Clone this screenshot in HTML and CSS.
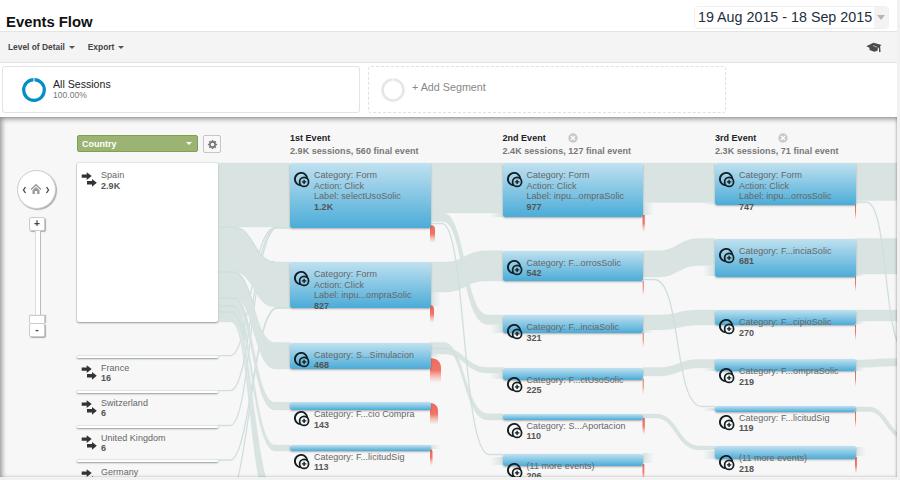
FILE: index.html
```html
<!DOCTYPE html>
<html lang="en">
<head>
<meta charset="utf-8">
<title>Events Flow</title>
<link rel="stylesheet" href="styles.css">
</head>
<body>
<svg class="defs" width="0" height="0">
  <symbol id="event" viewBox="0 0 16 16">
    <path d="M13.300 6.800A6.200 6.200 0 1 0 6.800 13.300" fill="none" stroke="#141e22" stroke-width="1.900"/>
    <circle cx="10.100" cy="9.900" r="4.500" fill="none" stroke="#141e22" stroke-width="1.700"/>
    <path d="M10.100 7.700v4.400M7.900 9.900h4.400" stroke="#141e22" stroke-width="1.400"/>
  </symbol>
  <symbol id="arrows" viewBox="0 0 16 16">
    <path d="M.7 2.400h5V.2l5 3.900-5 3.900V5.800h-5zM6 9.100h5V6.900l4.800 3.900-4.800 3.900v-2.200H6z" fill="#353233"/>
  </symbol>
  <symbol id="close" viewBox="0 0 10 10">
    <circle cx="5" cy="5" r="4.700" fill="#c9c9c9"/>
    <path d="M3 3l4 4M7 3l-4 4" stroke="#fff" stroke-width="1.300"/>
  </symbol>
</svg>
<div class="page">
  <header class="header">
    <h1 class="title">Events Flow</h1>
    <div class="date"><span class="date-text">19 Aug 2015 - 18 Sep 2015</span><span class="date-drop"><i class="caret caret-light"></i></span></div>
  </header>
  <nav class="toolbar">
    <span class="menu">Level of Detail<i class="caret"></i></span>
    <span class="menu">Export<i class="caret"></i></span>
    <svg class="cap" viewBox="0 0 16 11"><path d="M.3 4.200 7.500.8l8.200 2.100-1.600 1.200.5 5.700-1.500.4-.2-4.700-1 .6-.4 2.600-3.200 1.100L3.500 8V5.700z" fill="#4a4a4a"/><path d="M7 3.600l4.300 1.600" stroke="#ddd" stroke-width=".7"/></svg>
  </nav>
  <section class="segments">
    <div class="segment">
      <svg class="ring" viewBox="0 0 24 24"><circle cx="12" cy="12" r="10.300" fill="none" stroke="#058dc7" stroke-width="3.200"/><path d="M12 0v4" stroke="#fff" stroke-width="1"/></svg>
      <div><div class="seg-name">All Sessions</div><div class="seg-pct">100.00%</div></div>
    </div>
    <div class="segment segment-add">
      <svg class="ring" viewBox="0 0 24 24"><circle cx="12" cy="12" r="10.500" fill="none" stroke="#e6e6e6" stroke-width="2.600"/><path d="M12 0v4" stroke="#fff" stroke-width="1"/></svg>
      <div class="seg-add">+ Add Segment</div>
    </div>
  </section>
  <main class="canvas">
    <svg class="links" viewBox="0 117 897 360">
      <defs>
        <linearGradient id="out" x1="0" x2="1"><stop offset="0" stop-color="#d5e2e1"/><stop offset="1" stop-color="#d5e2e1" stop-opacity="0"/></linearGradient>
        <linearGradient id="in" x1="0" x2="1"><stop offset="0" stop-color="#d5e2e1" stop-opacity="0"/><stop offset="1" stop-color="#d5e2e1"/></linearGradient>
        <linearGradient id="drop" x1="0" x2="0" y1="0" y2="1"><stop offset="0" stop-color="#ef6a5a"/><stop offset=".5" stop-color="#ef7566"/><stop offset="1" stop-color="#f6a79d" stop-opacity="0"/></linearGradient>
      </defs>
      <g class="thin">
        <path d="M218 355.700H230C250 355.700 251 228 275 228H290"/>
        <path d="M218 390.700H230C252 390.700 251 227 277 227H290"/>
        <path d="M218 425.500H230C252 425.500 250 226.500 279 226.500H290"/>
        <path d="M218 460H230C250 460 254 308 277 308H290"/>
        <path d="M232 500C252 440 254 307.500 278 307.500H290"/>
      </g>
      <g class="band">
        <path d="M218 163H290V227H218z"/>
        <path d="M218 227H234C254 227 254 262 275 262H290V307H275C254 307 254 272 234 272H218z"/>
        <path d="M218 272H234C254 272 254 342.500 275 342.500H290V369H275C254 369 254 298 234 298H218z"/>
        <path d="M218 298H234C254 298 254 402.300 275 402.300H290V410H275C252 410 254 306 232 306H218z"/>
        <path d="M218 306H232C252 306 254 445 275 445H290V451H275C252 451 252 312 232 312H218z"/>
        <path d="M218 312H232C252 312 254 490 277 500H273C251 490 252 317 230 317H218z"/>
        <path d="M218 316H230C250 316 253 500 277 520H273C249 500 250 322 231 322H218z"/>
        <path d="M430 163H503V213H430z"/>
        <path d="M430 213H443C466 213 464 315 488 315H503V324.500H488C461 324.500 464 221.500 443 221.500H430z"/>
        <path d="M430 262H446C464 262 466 250.700 486 250.700H503V281H486C466 281 464 292 446 292H430z"/>
        <path d="M430 342.500H444C464 342.500 466 413.700 488 413.700H503V420H488C464 420 464 348.500 444 348.500H430z"/>
        <path d="M430 348H444C464 348 466 367.500 488 367.500H503V373H488C466 373 464 354 444 354H430z"/>
        <path d="M643 163H715V202.500H643z"/>
        <path d="M643 250.700H658C678 250.700 679 238.500 699 238.500H715V265.500H699C679 265.500 678 277 658 277H643z"/>
        <path d="M643 315H658C678 315 679 310 699 310H715V325H699C679 325 678 330 658 330H643z"/>
        <path d="M643 367.500H658C678 367.500 679 359.500 699 359.500H715V368H699C679 368 678 376 658 376H643z"/>
        <path d="M643 414H656C678 414 678 446 700 446H715V450H700C676 450 676 418 656 418H643z"/>
        <path d="M855 163H897V200.500H855z"/>
        <path d="M855 238.500H897V274H855z"/>
        <path d="M855 310H897V321H855z"/>
        <path d="M855 360C875 360 875 358.500 897 358.500V366C878 366 875 367.500 855 367.500z"/>
        <path d="M855 407H869C882 407 888 424 897 432V437C884 427 882 411.500 869 411.500H855z"/>
      </g>
      <g class="thin">
        <path d="M218 227.300H234C254 227.300 254 262 275 262M218 272H234C243 272 248 290 254 305M218 298H234C241 298 245 312 248 325M218 306H232C239 306 243 320 247 337M218 312H231C238 312 242 326 245 340"/>
        <path d="M430 223.500H442C466 223.500 462 454.500 489 454.500H503"/>
        <path d="M643 279.500H654C682 279.500 673 406.500 702 406.500H715"/>
        <path d="M855 202H866C888 202 883 330 902 350"/>
        <path d="M430 348.500H444C452 348.500 454 353 458 358"/>
      </g>
      <g fill="url(#out)">
        <path d="M430 292h11v14h-11z"/><path d="M430 354h11v3h-11z"/><path d="M430 445h11v4h-11z"/>
        <path d="M643 203h11v12h-11z"/><path d="M643 330h10v3h-10z"/><path d="M643 453h11v10h-11z"/>
        <path d="M855 202h11v1.500h-11z"/><path d="M855 274h11v2h-11z"/><path d="M855 321h10v3h-10z"/><path d="M855 368h10v3h-10z"/><path d="M855 447h11v9h-11z"/>
      </g>
      <g fill="url(#in)">
        <path d="M490 213h13v4h-13z"/><path d="M490 325h13v8h-13z"/><path d="M490 373h13v6h-13z"/><path d="M490 457h13v8h-13z"/>
        <path d="M703 203h12v1.500h-12z"/><path d="M703 266h12v10h-12z"/><path d="M703 368h12v3h-12z"/><path d="M703 408h12v3h-12z"/><path d="M703 451h12v8h-12z"/>
      </g>
      <g fill="url(#drop)">
        <path d="M430 225q5 0 5 4v14h-5z"/>
        <path d="M430 305q4 0 4 4v14h-4z"/>
        <path d="M430 358c7 0 11 4 11 10v15h-11z"/>
        <path d="M430 403c5 0 8 3 8 8v14h-8z"/>
        <path d="M430 449q2.500 0 2.500 3v14h-2.500z"/>
        <path d="M642.500 215h2.300v17h-2.300z"/>
        <path d="M642.500 418h2.300v17h-2.300z"/>
        <path d="M642.500 464h1.800v17h-1.800z"/>
        <path d="M855 457h1.900v17H855z"/>
        <path d="M642.700 281h1v15h-1z"/><path d="M642.700 333h1v15h-1z"/><path d="M642.700 379h1v16h-1z"/>
        <path d="M855 204h1v16h-1z"/><path d="M855 276h1v16h-1z"/><path d="M855 325h1v16h-1z"/><path d="M855 371h1v16h-1z"/><path d="M855 412h1v16h-1z"/>
      </g>
    </svg>

    <div class="heads">
      <div class="dimension">
        <div class="select">Country<i class="caret caret-white"></i></div>
        <div class="gear"><svg viewBox="0 0 12 12"><circle cx="6" cy="6" r="2.900" fill="none" stroke="#777" stroke-width="1.800"/><path d="M6 1v1.800M6 9.200V11M1 6h1.800M9.200 6H11M2.500 2.500l1.200 1.200M8.300 8.300l1.200 1.200M2.500 9.500l1.200-1.200M8.300 3.700l1.200-1.200" stroke="#777" stroke-width="1.700"/></svg></div>
      </div>
      <div class="head"><div class="head-title">1st Event</div><div class="head-sub">2.9K sessions, 560 final event</div></div>
      <div class="head"><div class="head-title"><span class="head-name">2nd Event</span><svg class="close"><use href="#close"/></svg></div><div class="head-sub">2.4K sessions, 127 final event</div></div>
      <div class="head"><div class="head-title"><span class="head-name head-name-3">3rd Event</span><svg class="close"><use href="#close"/></svg></div><div class="head-sub">2.3K sessions, 71 final event</div></div>
    </div>

    <div class="pan-zoom">
      <div class="pan"><svg viewBox="0 0 39 39"><path d="M8.500 17l-2 3 2 3M29.500 17l2 3-2 3" fill="none" stroke="#444" stroke-width="1.300"/><path d="M14 19.500l5-4.700 5 4.700" fill="none" stroke="#999" stroke-width="1.500"/><path d="M15.500 20.300l3.500-3.200 3.500 3.200V24h-2.300v-3h-2.400v3h-2.300z" fill="#999"/></svg></div>
      <div class="zoom-btn">+</div>
      <div class="track"></div>
      <div class="handle"></div>
      <div class="zoom-btn">-</div>
    </div>

    <div class="node country" style="--y:46px;--h:158.500px"><svg class="icon"><use href="#arrows"/></svg>Spain<b>2.9K</b></div>
    <div class="node country" style="--y:238.500px;--h:2.500px"><svg class="icon"><use href="#arrows"/></svg>France<b>16</b></div>
    <div class="node country" style="--y:273.500px;--h:2.500px"><svg class="icon"><use href="#arrows"/></svg>Switzerland<b>6</b></div>
    <div class="node country" style="--y:308.500px;--h:2.500px"><svg class="icon"><use href="#arrows"/></svg>United Kingdom<b>6</b></div>
    <div class="node country" style="--y:342.500px;--h:2.500px"><svg class="icon"><use href="#arrows"/></svg>Germany</div>

    <div class="node first" style="--y:46px;--h:65px"><svg class="icon"><use href="#event"/></svg>Category: Form<br>Action: Click<br>Label: selectUsoSolic<b>1.2K</b></div>
    <div class="node first" style="--y:145px;--h:46px"><svg class="icon"><use href="#event"/></svg>Category: Form<br>Action: Click<br>Label: inpu...ompraSolic<b>827</b></div>
    <div class="node first" style="--y:225.500px;--h:26.500px"><svg class="icon"><use href="#event"/></svg>Category: S...Simulacion<b>468</b></div>
    <div class="node first" style="--y:285px;--h:8px"><svg class="icon"><use href="#event"/></svg>Category: F...cio Compra<b>143</b></div>
    <div class="node first" style="--y:327.500px;--h:6.500px"><svg class="icon"><use href="#event"/></svg>Category: F...licitudSig<b>113</b></div>

    <div class="node second" style="--y:46px;--h:54px"><svg class="icon"><use href="#event"/></svg>Category: Form<br>Action: Click<br>Label: inpu...ompraSolic<b>977</b></div>
    <div class="node second" style="--y:133.500px;--h:30.500px"><svg class="icon"><use href="#event"/></svg>Category: F...orrosSolic<b>542</b></div>
    <div class="node second" style="--y:198px;--h:18px"><svg class="icon"><use href="#event"/></svg>Category: F...inciaSolic<b>321</b></div>
    <div class="node second" style="--y:250.500px;--h:12.500px"><svg class="icon"><use href="#event"/></svg>Category: F...ctUsoSolic<b>225</b></div>
    <div class="node second" style="--y:296.500px;--h:6.500px"><svg class="icon"><use href="#event"/></svg>Category: S...Aportacion<b>110</b></div>
    <div class="node second" style="--y:336.500px;--h:12px"><svg class="icon"><use href="#event"/></svg>(11 more events)<b>206</b></div>

    <div class="node third" style="--y:46px;--h:41.500px"><svg class="icon"><use href="#event"/></svg>Category: Form<br>Action: Click<br>Label: inpu...orrosSolic<b>747</b></div>
    <div class="node third" style="--y:121.500px;--h:38px"><svg class="icon"><use href="#event"/></svg>Category: F...inciaSolic<b>681</b></div>
    <div class="node third" style="--y:193px;--h:15px"><svg class="icon"><use href="#event"/></svg>Category: F...cipioSolic<b>270</b></div>
    <div class="node third" style="--y:242px;--h:12px"><svg class="icon"><use href="#event"/></svg>Category: F...ompraSolic<b>219</b></div>
    <div class="node third" style="--y:288.500px;--h:6.500px"><svg class="icon"><use href="#event"/></svg>Category: F...licitudSig<b>119</b></div>
    <div class="node third" style="--y:329px;--h:13px"><svg class="icon"><use href="#event"/></svg>(11 more events)<b>218</b></div>
  </main>
</div>
</body>
</html>
```
FILE: styles.css
```css
* { box-sizing: border-box; }
body {
  margin: 0;
  height: 480px;
  overflow: hidden;
  background: #f1f1f1;
  font-family: "Liberation Sans", Arial, sans-serif;
  color: #222;
}
.defs { display: block; position: absolute; }
.page { width: 897px; height: 477px; background: #fff; display: flex; flex-direction: column; }

.header { height: 31px; display: flex; justify-content: space-between; padding: 6px 8px 0 6px; }
.title { margin: 7px 0 0; font-size: 14.850px; line-height: 18px; font-weight: bold; color: #111; white-space: nowrap; }
.date { width: 195px; height: 23px; border: 1px solid #f0f0f0; border-radius: 4px; display: flex; overflow: hidden; }
.date-text { flex: 1; padding-left: 3px; font-size: 14.300px; line-height: 21px; color: #222f3d; white-space: nowrap; }
.date-drop { width: 14px; background: #f3f3f3; display: flex; align-items: center; justify-content: center; }

.caret { display: inline-block; border: solid transparent; border-width: 3px 3px 0; border-top-color: #555; }
.caret-light { border-width: 5px 4.500px 0; border-top-color: #b5b5b5; }
.caret-white { border-top-color: #fff; }

.toolbar {
  height: 32px;
  background: #f4f4f4;
  border: solid #e4e4e4;
  border-width: 1px 0;
  display: flex;
  align-items: center;
  gap: 13px;
  padding: 0 15px 0 8px;
}
.menu { display: flex; align-items: center; gap: 4px; font-size: 8.400px; font-weight: bold; color: #444; white-space: nowrap; }
.cap { width: 16px; height: 11px; margin-left: auto; }

.segments { height: 54px; display: flex; gap: 8px; padding: 3px 2px 4px; }
.segment { width: 358px; height: 47px; border: 1px solid #e3e3e3; border-radius: 3px; display: flex; align-items: center; gap: 7px; padding-left: 19px; }
.segment-add { border: 1px dashed #e0e0e0; padding-left: 12px; }
.ring { width: 24px; height: 24px; }
.seg-name { font-size: 10.600px; line-height: 12px; color: #222; }
.seg-pct { font-size: 8.550px; line-height: 11px; color: #777; }
.seg-add { font-size: 10.750px; line-height: 14px; color: #888; margin-top: -5px; }

.canvas { position: relative; height: 360px; background: #f7f7f7; overflow: hidden; font-size: 9px; }
.canvas::after {
  content: "";
  position: absolute;
  inset: 0;
  box-shadow: inset 2px 2px 5px rgba(0, 0, 0, .4), inset -1px 0 2px rgba(0, 0, 0, .15);
  pointer-events: none;
}
.links { position: absolute; inset: 0; width: 897px; height: 360px; }
.band path { fill: #d8e3e2; stroke: #d2dfde; stroke-width: .3; }
.thin path { fill: none; stroke: #d0dfde; stroke-width: 1.300; }

.heads { position: relative; display: grid; grid-template-columns: 213px 212.500px 212.500px auto; padding: 14px 0 0 77px; }
.dimension { display: flex; gap: 5px; padding-top: 4px; }
.select {
  width: 121px;
  height: 17px;
  display: flex;
  justify-content: space-between;
  align-items: center;
  padding: 0 5px 0 4px;
  background: #9bb474;
  border: 1px solid #81a052;
  border-radius: 2px;
  color: #fff;
  font-weight: bold;
}
.gear { width: 18px; height: 18px; border: 1px solid #c6c6c6; border-radius: 2px; background: #f8f8f8; display: flex; align-items: center; justify-content: center; }
.gear svg { width: 11px; height: 11px; }
.head { font-weight: bold; white-space: nowrap; }
.head-title { display: flex; align-items: center; height: 14px; color: #222; letter-spacing: .02px; }
.head-name { width: 65px; }
.head-name-3 { width: 63px; }
.close { width: 10px; height: 10px; }
.head-sub { line-height: 13px; color: #777; letter-spacing: .05px; }

.pan-zoom { position: absolute; left: 17px; top: 53px; width: 39px; display: flex; flex-direction: column; align-items: center; }
.pan { width: 39px; height: 39px; border-radius: 50%; border: 1px solid #ccc; background: #fff; box-shadow: 1px 1px 1px #aaa; margin-bottom: 8px; }
.pan svg { display: block; margin: -1px; width: 39px; height: 39px; }
.zoom-btn { width: 16px; height: 14px; margin-left: 1px; border: 1px solid #ccc; border-radius: 2px; background: #fff; box-shadow: 1px 1px 1px #aaa; text-align: center; font-weight: bold; font-size: 10px; line-height: 12px; color: #444; }
.track { width: 6px; height: 84px; margin-left: 2px; border: solid #bbb; border-width: 0 1px; border-left-color: #ddd; background: #fff; }
.handle { width: 16px; height: 8px; margin-left: 1px; border: 1px solid #ccc; border-bottom: 0; background: #fff; box-shadow: 1px 0 1px #bbb; }

.node {
  position: absolute;
  top: var(--y);
  width: 140.500px;
  height: var(--h);
  border-radius: 2px;
  padding-left: 24px;
  line-height: 10.670px;
  letter-spacing: .04px;
  color: #666;
  white-space: nowrap;
  background: linear-gradient(#c0e1f0, #4bacd8);
  box-shadow: 0 1px 2px rgba(0, 0, 0, .3);
}
/* Keeps the label offset without giving thin nodes a minimum height. */
.node::before { content: ""; display: block; height: 7px; }
.node b { display: block; color: #555; }
.icon { position: absolute; left: 4px; top: 9px; width: 16px; height: 16px; }
.country { left: 77px; width: 141px; background: #fff; box-shadow: 0 1px 2px rgba(0, 0, 0, .35), 0 0 1px 1px #dfe9e8; }
.first { left: 290px; }
.second { left: 502.500px; }
.third { left: 715px; }
```
